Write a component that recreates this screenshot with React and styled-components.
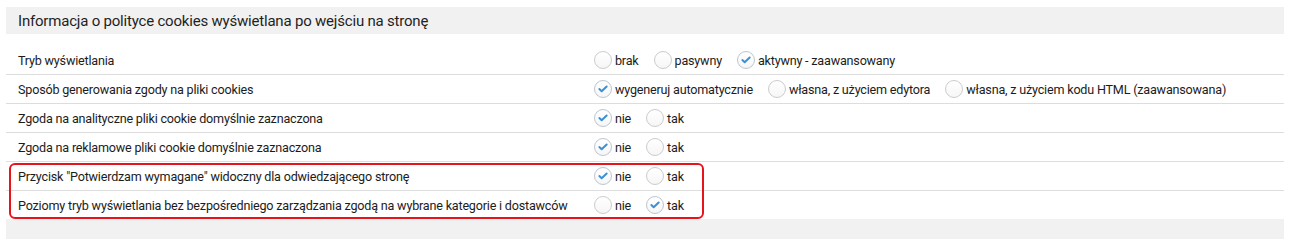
import React from "react";
import styled, { createGlobalStyle } from "styled-components";

const GlobalStyle = createGlobalStyle`
  body {
    margin: 0;
    background: #ffffff;
    font-family: Roboto, "Liberation Sans", Arial, sans-serif;
    color: #222222;
  }
`;

const Page = styled.div`
  padding: 7px 5px 0 6px;
`;

const SectionHeader = styled.div`
  height: 27px;
  background-color: #f1f1f1;
  display: flex;
  align-items: center;
  padding-left: 12px;
  font-size: 15px;
  letter-spacing: -0.2px;
  color: #1f1f1f;
`;

const Table = styled.div`
  margin-top: 12px;
`;

const Row = styled.div`
  display: flex;
  align-items: center;
  height: 28px;
  border-bottom: ${(p) => (p.last ? "none" : "1px solid #dddddd")};
  font-size: 12.6px;
  letter-spacing: -0.2px;
  color: #1c1c1c;
`;

const Label = styled.div`
  width: 576px;
  padding-left: 12px;
  flex-shrink: 0;
  white-space: nowrap;
`;

const Options = styled.div`
  display: flex;
  align-items: center;
  gap: 15px;
`;

const Option = styled.label`
  display: flex;
  align-items: center;
  gap: 3px;
  cursor: pointer;
  white-space: nowrap;
`;

const Circle = styled.span`
  width: 16px;
  height: 16px;
  border-radius: 50%;
  border: 1px solid ${(p) => (p.checked ? "#bcc6d0" : "#cccccc")};
  background: linear-gradient(#ffffff, #f6f6f6);
  display: flex;
  align-items: center;
  justify-content: center;
`;

const Highlight = styled.div`
  position: relative;
  &::after {
    content: "";
    position: absolute;
    left: 3px;
    top: 1px;
    width: 695px;
    bottom: 0;
    border: 2px solid #e8141c;
    border-radius: 6px;
    box-sizing: border-box;
    pointer-events: none;
  }
`;

const NextBand = styled.div`
  height: 20px;
  background-color: #f1f1f1;
`;

const Radio = ({ checked, children }) => (
  <Option>
    <Circle checked={checked}>
      {checked && (
        <svg width="10" height="8" viewBox="0 0 11 9">
          <path
            d="M1.4 4.6 L4 7 L9.6 1.6"
            fill="none"
            stroke="#3a8fd6"
            strokeWidth="2.2"
            strokeLinecap="round"
            strokeLinejoin="round"
          />
        </svg>
      )}
    </Circle>
    {children}
  </Option>
);

const Setting = ({ label, options, value, last }) => (
  <Row last={last}>
    <Label>{label}</Label>
    <Options>
      {options.map((o) => (
        <Radio key={o} checked={o === value}>
          {o}
        </Radio>
      ))}
    </Options>
  </Row>
);

const yesNo = ["nie", "tak"];

export default function App() {
  return (
    <Page>
      <GlobalStyle />
      <SectionHeader>
        Informacja o polityce cookies wyświetlana po wejściu na stronę
      </SectionHeader>
      <Table>
        <Setting
          label="Tryb wyświetlania"
          options={["brak", "pasywny", "aktywny - zaawansowany"]}
          value="aktywny - zaawansowany"
        />
        <Setting
          label="Sposób generowania zgody na pliki cookies"
          options={[
            "wygeneruj automatycznie",
            "własna, z użyciem edytora",
            "własna, z użyciem kodu HTML (zaawansowana)",
          ]}
          value="wygeneruj automatycznie"
        />
        <Setting
          label="Zgoda na analityczne pliki cookie domyślnie zaznaczona"
          options={yesNo}
          value="nie"
        />
        <Setting
          label="Zgoda na reklamowe pliki cookie domyślnie zaznaczona"
          options={yesNo}
          value="nie"
        />
        <Highlight>
          <Setting
            label={'Przycisk "Potwierdzam wymagane" widoczny dla odwiedzającego stronę'}
            options={yesNo}
            value="nie"
          />
          <Setting
            label="Poziomy tryb wyświetlania bez bezpośredniego zarządzania zgodą na wybrane kategorie i dostawców"
            options={yesNo}
            value="tak"
            last
          />
        </Highlight>
      </Table>
      <NextBand />
    </Page>
  );
}
